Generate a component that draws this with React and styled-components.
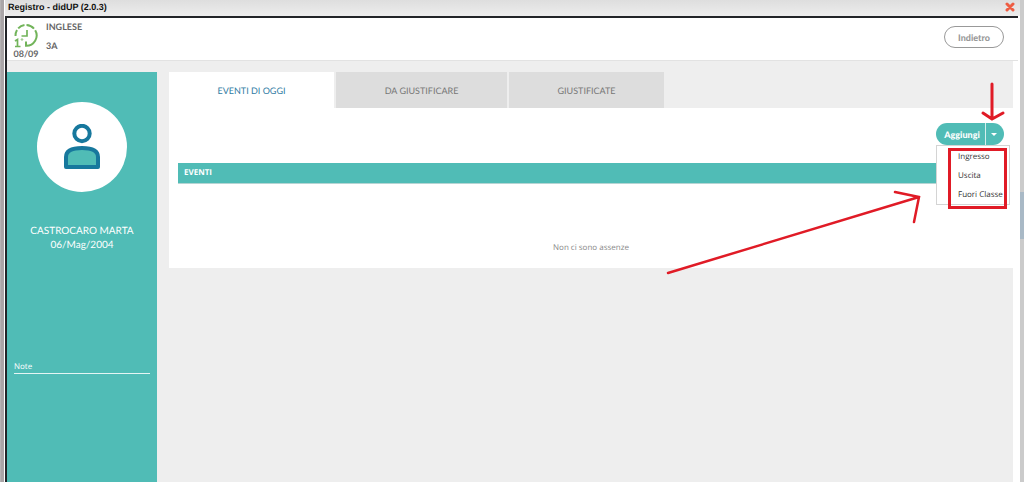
import React from 'react';
import styled, { createGlobalStyle } from 'styled-components';

const tabs = [
  { label: 'EVENTI DI OGGI', width: 165, active: true },
  { label: 'DA GIUSTIFICARE', width: 171 },
  { label: 'GIUSTIFICATE', width: 155 },
];

const actions = ['Ingresso', 'Uscita', 'Fuori Classe'];

const ClockIcon = () => (
  <svg width='24' height='26' viewBox='0 0 24 26' fill='none' stroke='#72b45a' strokeWidth='2'>
    <path d='M1.500 14A10.500 10.500 0 0 1 3 8' />
    <path d='M4.200 6.400A10.500 10.500 0 0 1 10.500 3' />
    <path d='M12.500 3A10.500 10.500 0 0 1 20 6.700' />
    <path d='M21.200 8.200A10.300 10.300 0 0 1 12 23.700V19.500' />
    <path d='M13 8v6H7.500' strokeWidth='1.700' />
    <path d='M1 19L3.500 17.500V24.200M1 24.500h5.500' strokeWidth='1.700' />
    <circle cx='8' cy='17.500' r='0.800' strokeWidth='0.800' />
  </svg>
);

const UserIcon = () => (
  <svg width='36' height='46' viewBox='0 0 36 46' stroke='#17789d' strokeWidth='4'>
    <circle cx='18' cy='9.500' r='7.700' fill='#fff' />
    <path
      d='M2 43V33C2 27 8 24 18 24S34 27 34 33V43Z'
      fill='#50bcb6'
      strokeLinejoin='round'
    />
  </svg>
);

const Marks = () => (
  <MarksLayer
    width='360'
    height='300'
    viewBox='0 0 360 300'
    fill='none'
    stroke='#e01b26'
    strokeWidth='3'
    strokeLinecap='round'
    aria-hidden='true'
  >
    <path d='M328 84v35M319 113l9 6 11-6' />
    <rect x='285.500' y='149.500' width='56' height='58' strokeLinecap='butt' />
    <path d='M4 273L255 197M231 192l24 5-5 25' strokeWidth='2.500' />
  </MarksLayer>
);

const App = () => {
  return (
    <Page>
      <GlobalStyle />
      <TitleBar>
        <Title>Registro - didUP (2.0.3)</Title>
        <CloseButton aria-label='Chiudi'>
          <svg width='10' height='10' viewBox='0 0 10 10'>
            <path
              d='M2 2l6 6M8 2l-6 6'
              stroke='#ee5d43'
              strokeWidth='3'
              strokeLinecap='round'
            />
          </svg>
        </CloseButton>
      </TitleBar>
      <Frame>
        <Header>
          <Hour>
            <ClockIcon />
            <HourDate>08/09</HourDate>
          </Hour>
          <Lesson>
            <span>INGLESE</span>
            <span>3A</span>
          </Lesson>
          <BackButton>Indietro</BackButton>
        </Header>
        <Body>
          <Sidebar>
            <Avatar>
              <UserIcon />
            </Avatar>
            <Student>
              CASTROCARO MARTA
              <br />
              06/Mag/2004
            </Student>
            <Note>Note</Note>
          </Sidebar>
          <Main>
            <Tabs role='tablist'>
              {tabs.map(({ label, width, active }) => (
                <Tab
                  key={label}
                  role='tab'
                  aria-selected={!!active}
                  $width={width}
                  $active={active}
                >
                  {label}
                </Tab>
              ))}
            </Tabs>
            <Panel>
              <Toolbar>
                <Split>
                  <AddButton>Aggiungi</AddButton>
                  <CaretButton aria-label='Apri menu'>
                    <Caret />
                  </CaretButton>
                  <Menu>
                    {actions.map((action) => (
                      <li key={action}>
                        <MenuItem>{action}</MenuItem>
                      </li>
                    ))}
                  </Menu>
                </Split>
              </Toolbar>
              <Table>
                <thead>
                  <tr>
                    <HeadCell>EVENTI</HeadCell>
                  </tr>
                </thead>
                <tbody>
                  <tr>
                    <EmptyCell>Non ci sono assenze</EmptyCell>
                  </tr>
                </tbody>
              </Table>
            </Panel>
          </Main>
        </Body>
      </Frame>
      <Scroll>
        <Thumb />
      </Scroll>
      <Marks />
    </Page>
  );
};

export default App;

const GlobalStyle = createGlobalStyle`
  * {
    box-sizing: border-box;
  }

  body {
    margin: 0;
    font-family: Lato, sans-serif;
    color: #666;
    text-rendering: geometricPrecision;
  }

  button {
    margin: 0;
    padding: 0;
    border: 0;
    background: none;
    font-family: inherit;
    text-rendering: inherit;
    cursor: pointer;
  }
`;

const Page = styled.div`
  position: relative;
  display: grid;
  grid-template-columns: 1fr 4px;
  grid-template-rows: 16px 1fr;
  min-height: 100vh;
  padding-left: 5px;
  background: linear-gradient(to right, #b5b3b4 0, #b5b3b4 1px, #a9a5a7 1px, #a9a5a7 4px, #fff 4px);
`;

const TitleBar = styled.div`
  display: flex;
  align-items: center;
  justify-content: space-between;
  padding: 0 5px 3px 3px;
  background: linear-gradient(#dedede, #ededed);
`;

const Title = styled.h1`
  margin: 0;
  font: bold 9px/12px 'Liberation Sans', Arial, sans-serif;
  color: #111;
`;

const CloseButton = styled.button`
  display: flex;
`;

const Frame = styled.div`
  display: flex;
  flex-direction: column;
  margin-right: 2px;
  border-top: 2px solid #222428;
  border-left: 2px solid #222428;
  background: #fff;
`;

const Header = styled.header`
  display: flex;
  height: 43px;
  padding: 4px 14px 0 6px;
  border-bottom: 1px solid #e2e2e2;
`;

const Hour = styled.div`
  display: flex;
  flex-direction: column;
  align-items: center;
  width: 26px;
`;

const HourDate = styled.span`
  font-size: 9px;
  line-height: 12px;
  font-weight: 700;
`;

const Lesson = styled.div`
  display: flex;
  flex-direction: column;
  flex: 1;
  gap: 9px;
  padding-left: 7px;
  font-size: 9px;
  line-height: 10px;
  font-weight: 700;
`;

const BackButton = styled.button`
  width: 60px;
  height: 22px;
  margin-top: 4px;
  border: 1px solid #999;
  border-radius: 11px;
  font-size: 9px;
  font-weight: 900;
  color: #999;
`;

const Body = styled.div`
  display: flex;
  flex: 1;
  gap: 12px;
  margin-right: 5px;
  padding-top: 11px;
  background: #eee;
`;

const Sidebar = styled.aside`
  display: flex;
  flex-direction: column;
  align-items: center;
  width: 150px;
  padding: 30px 7px 0;
  background: #50bcb6;
  color: #fff;
`;

const Avatar = styled.div`
  display: flex;
  align-items: center;
  justify-content: center;
  width: 90px;
  height: 90px;
  border-radius: 50%;
  background: #fff;
`;

const Student = styled.p`
  margin: 32px 0 0;
  font-size: 10px;
  line-height: 14px;
  text-align: center;
`;

const Note = styled.div`
  align-self: stretch;
  margin-top: 109px;
  border-bottom: 1px solid #e5f5f4;
  font: 8px/12px 'Open Sans', sans-serif;
`;

const Main = styled.main`
  flex: 1;
`;

const Tabs = styled.div`
  display: flex;
  gap: 2px;
`;

const Tab = styled.button`
  width: ${({ $width }) => $width}px;
  height: 36px;
  background: ${({ $active }) => ($active ? '#fff' : '#ddd')};
  color: ${({ $active }) => ($active ? '#2f7ba3' : '#777')};
  font-size: 9px;
`;

const Panel = styled.section`
  padding: 15px 9px 0;
  background: #fff;
`;

const Toolbar = styled.div`
  display: flex;
  justify-content: flex-end;
  height: 40px;
`;

const Split = styled.div`
  position: relative;
  display: flex;
  width: 68px;
  height: 22px;
  border-radius: 11px;
  background: #50bcb6;
`;

const AddButton = styled.button`
  flex: 1;
  padding-left: 3px;
  color: #fff;
  font-size: 9px;
  font-weight: 900;
`;

const CaretButton = styled.button`
  display: flex;
  align-items: center;
  width: 19px;
  padding-left: 5px;
  border-left: 1px solid #d5efed;
`;

const Caret = styled.span`
  border: 3px solid transparent;
  border-top-color: #fff;
  border-bottom: 0;
`;

const Menu = styled.ul`
  position: absolute;
  top: 22px;
  left: 0;
  width: 74px;
  margin: 0;
  padding: 1px 0 0;
  border: 1px solid #d4d4d4;
  background: #fff;
  list-style: none;
`;

const MenuItem = styled.button`
  display: block;
  width: 100%;
  height: 19px;
  padding-left: 21px;
  font: 8px/19px 'Open Sans', sans-serif;
  text-align: left;
  white-space: nowrap;
  color: #333;
`;

const Table = styled.table`
  width: 100%;
  border-collapse: collapse;
`;

const HeadCell = styled.th`
  height: 20px;
  padding: 1px 6px 0;
  border-bottom: 1px solid #b5d5d4;
  background: #50bcb6;
  color: #fff;
  font: bold 8px/18px 'Open Sans', sans-serif;
  text-align: left;
`;

const EmptyCell = styled.td`
  height: 85px;
  padding: 44px 0 0;
  color: #888;
  font: 8px/12px 'Open Sans', sans-serif;
  text-align: center;
`;

const Scroll = styled.div`
  grid-column: 2;
  grid-row: 1 / 3;
  padding-top: 192px;
  background: #cbcbcb;
`;

const Thumb = styled.div`
  height: 47px;
  background: #a9b9c6;
`;

const MarksLayer = styled.svg`
  position: absolute;
  top: 0;
  right: 0;
  pointer-events: none;
`;
